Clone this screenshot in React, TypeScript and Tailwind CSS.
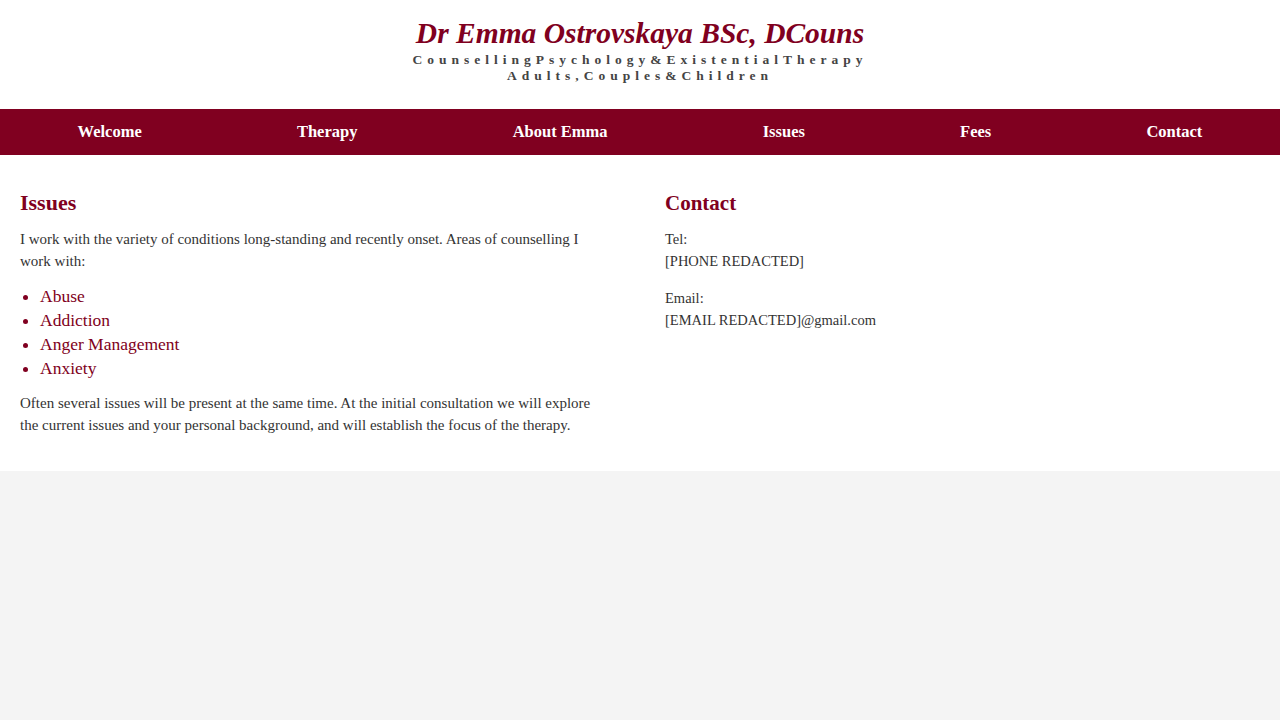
import React from "react";

const serif = { fontFamily: '"Liberation Serif", "Times New Roman", serif' };

export default function App() {
  const nav = ["Welcome", "Therapy", "About Emma", "Issues", "Fees", "Contact"];
  const issues = ["Abuse", "Addiction", "Anger Management", "Anxiety"];
  return (
    <div className="min-h-[720px] bg-[#f4f4f4]" style={serif}>
      <header className="bg-white h-[109px] flex flex-col items-center pt-[16px]">
        <h1 className="text-[29.5px] leading-[34px] font-bold italic text-[#800020]">
          Dr Emma Ostrovskaya BSc, DCouns
        </h1>
        <div className="mt-[2px] text-[13.5px] leading-[16px] font-bold text-[#444] tracking-[5px] text-center">
          <div>CounsellingPsychology&amp;ExistentialTherapy</div>
          <div>Adults,Couples&amp;Children</div>
        </div>
      </header>
      <nav className="bg-[#800020] h-[46px] flex items-center justify-around">
        {nav.map((n) => (
          <a key={n} className="text-white font-bold text-[16.5px]">
            {n}
          </a>
        ))}
      </nav>
      <main className="bg-white px-5 pt-[35px] pb-[35px] grid grid-cols-[600px_1fr] gap-[45px]">
        <section>
          <h2 className="text-[22px] leading-[26px] font-bold text-[#800020] mb-[12px]">Issues</h2>
          <p className="max-w-[590px] text-[15px] leading-[22px] text-[#333]">
            I work with the variety of conditions long-standing and recently onset. Areas of counselling I work with:
          </p>
          <ul className="list-disc pl-5 my-[12px] text-[#800020] text-[17.5px] leading-[24px] marker:text-[#800020]">
            {issues.map((i) => (
              <li key={i}>{i}</li>
            ))}
          </ul>
          <p className="max-w-[590px] text-[15px] leading-[22px] text-[#333]">
            Often several issues will be present at the same time. At the initial consultation we will explore the current issues and your personal background, and will establish the focus of the therapy.
          </p>
        </section>
        <section>
          <h2 className="text-[21px] leading-[26px] font-bold text-[#800020] mb-[12px]">Contact</h2>
          <p className="text-[14.5px] leading-[22px] text-[#333]">
            Tel:
            <br />
            [PHONE REDACTED]
          </p>
          <p className="mt-[15px] text-[14.5px] leading-[22px] text-[#333]">
            Email:
            <br />
            [EMAIL REDACTED]@gmail.com
          </p>
        </section>
      </main>
    </div>
  );
}
